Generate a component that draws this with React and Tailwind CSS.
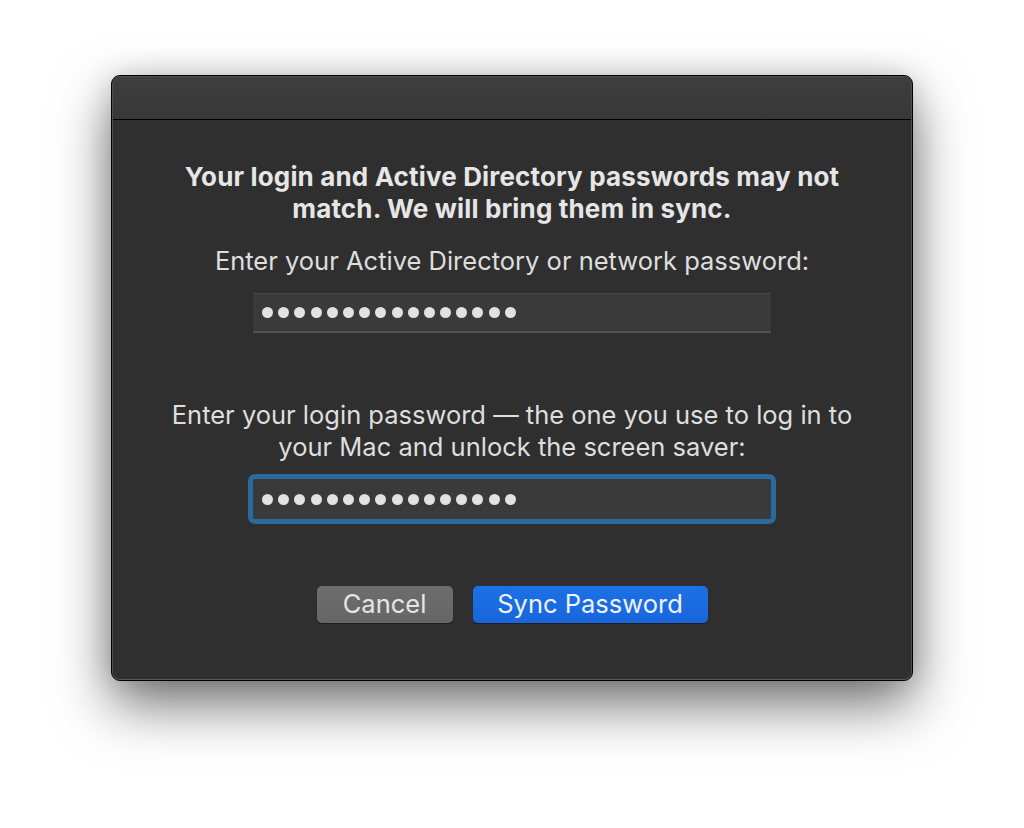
import React from "react";

function Dots() {
  return (
    <div className="flex items-center gap-[5.2px] pl-[9px]">
      {Array.from({ length: 16 }).map((_, i) => (
        <div key={i} className="w-[11px] h-[11px] rounded-full bg-[#e2e2e2]" />
      ))}
    </div>
  );
}

export default function App() {
  return (
    <div
      className="min-h-[828px] w-full bg-white flex justify-center pt-[75px]"
      style={{ fontFamily: "Inter, 'Noto Sans', sans-serif" }}
    >
      <div className="w-[802px] h-[606px] rounded-[9px] border border-black bg-[#2f2f2f] shadow-[0_24px_55px_rgba(0,0,0,0.55),0_0_28px_rgba(0,0,0,0.14)] overflow-hidden">
        <div className="h-full w-full rounded-[8px] border border-[#4f4f4f] border-b-[#5a5a5a] overflow-hidden flex flex-col">
          <div className="h-[43px] shrink-0 bg-gradient-to-b from-[#3f3f3f] to-[#373737] border-b border-black" />
          <div className="flex flex-col items-center pt-[41px]">
            <p className="text-center font-bold text-[26px] tracking-[0.15px] leading-[32px] text-[#e6e6e6] whitespace-nowrap">
              Your login and Active Directory passwords may not
              <br />
              match. We will bring them in sync.
            </p>
            <p className="mt-[20px] text-center text-[25.5px] leading-[32px] text-[#dedede] whitespace-nowrap">
              Enter your Active Directory or network password:
            </p>
            <div className="mt-[16px] w-[518px] h-[40px] bg-[#3a3a3a] border-t border-t-[#464646] border-b-2 border-b-[#525252] flex items-center">
              <Dots />
            </div>
            <p className="mt-[66px] text-center text-[25.5px] leading-[32px] text-[#dedede] whitespace-nowrap">
              Enter your login password — the one you use to log in to
              <br />
              your Mac and unlock the screen saver:
            </p>
            <div className="mt-[16px] w-[518px] h-[40px] bg-[#3a3a3a] flex items-center rounded-[2px] outline-[5px] outline-solid outline-[#2b6a9c]">
              <Dots />
            </div>
            <div className="mt-[67px] flex gap-[20px]">
              <button className="w-[136px] h-[37px] rounded-[5px] bg-gradient-to-b from-[#6d6d6d] to-[#666666] text-[25.5px] text-[#e6e6e6] flex items-center justify-center shadow-[0_1px_1px_rgba(0,0,0,0.4)]">
                Cancel
              </button>
              <button className="w-[235px] h-[37px] rounded-[5px] bg-gradient-to-b from-[#1d70e6] to-[#1966dc] text-[25.5px] text-[#eef2fb] flex items-center justify-center shadow-[0_1px_1px_rgba(0,0,0,0.4)]">
                Sync Password
              </button>
            </div>
          </div>
        </div>
      </div>
    </div>
  );
}
